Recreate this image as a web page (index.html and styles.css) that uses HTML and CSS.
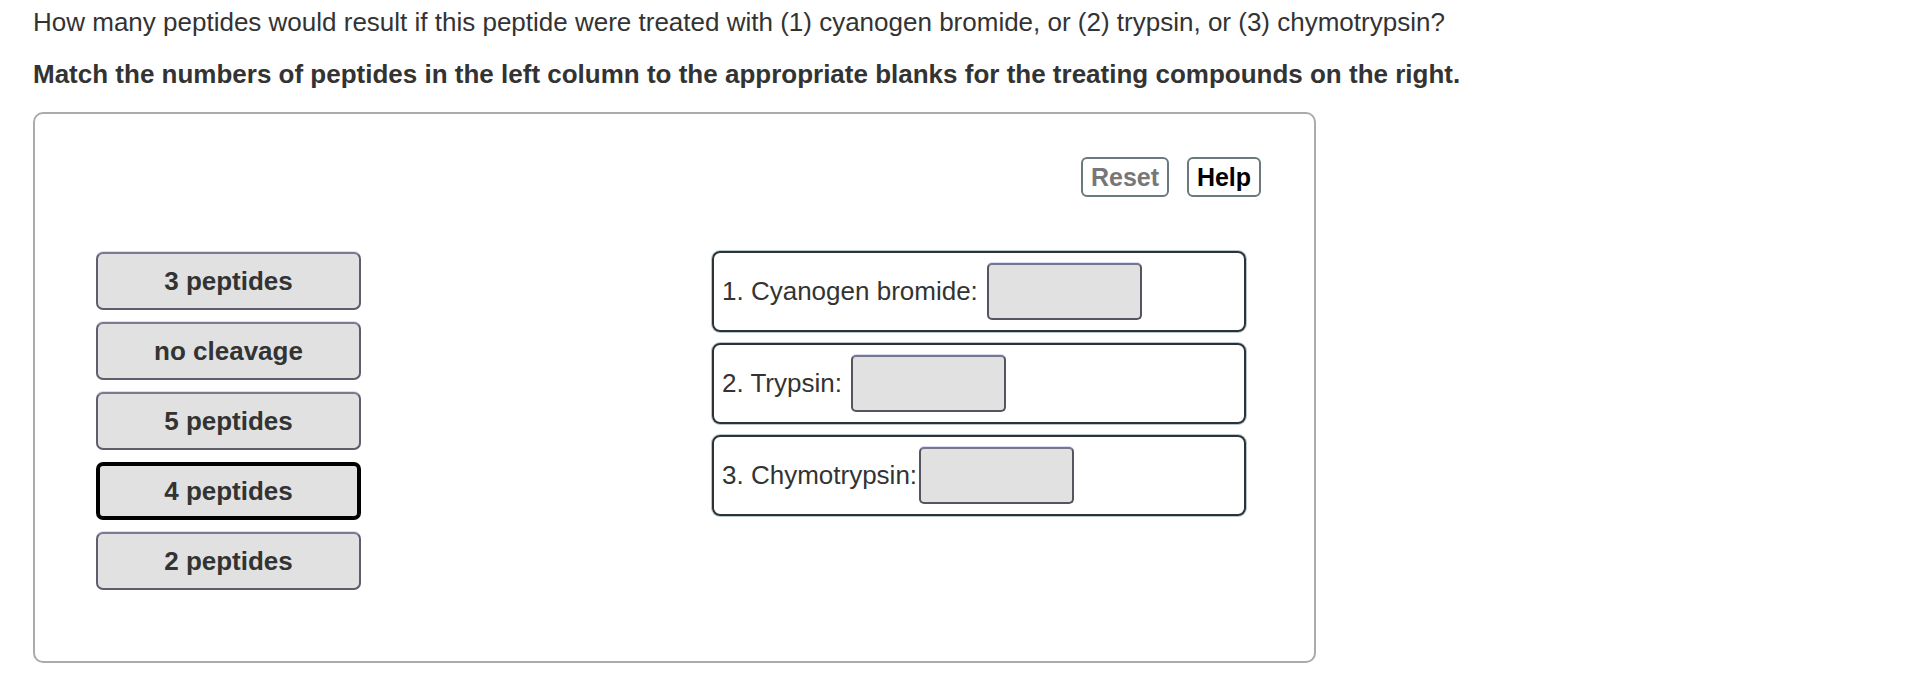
FILE: index.html
```html
<!DOCTYPE html>
<html lang="en">
<head>
<meta charset="utf-8">
<title>Peptide matching</title>
<link rel="stylesheet" href="styles.css">
</head>
<body>
<p class="question">How many peptides would result if this peptide were treated with (1) cyanogen bromide, or (2) trypsin, or (3) chymotrypsin?</p>
<p class="instruction">Match the numbers of peptides in the left column to the appropriate blanks for the treating compounds on the right.</p>
<div class="panel">
  <div class="toolbar">
    <button class="tool-btn reset">Reset</button>
    <button class="tool-btn help">Help</button>
  </div>
  <div class="workspace">
    <div class="choices">
      <div class="chip">3 peptides</div>
      <div class="chip">no cleavage</div>
      <div class="chip">5 peptides</div>
      <div class="chip chip-selected">4 peptides</div>
      <div class="chip">2 peptides</div>
    </div>
    <div class="targets">
      <div class="target"><span class="label">1. Cyanogen bromide:&nbsp;</span><span class="blank"></span></div>
      <div class="target"><span class="label">2. Trypsin:&nbsp;</span><span class="blank"></span></div>
      <div class="target"><span class="label">3. Chymotrypsin:</span><span class="blank"></span></div>
    </div>
  </div>
</div>
</body>
</html>
```
FILE: styles.css
```css
* { box-sizing: border-box; }
html, body { margin: 0; padding: 0; background: #fff; }
body {
  font-family: "Liberation Sans", Arial, Helvetica, sans-serif;
  color: #333;
  padding: 7px 0 0 33px;
}
.question {
  margin: 0;
  font-size: 26px;
  line-height: 30px;
}
.instruction {
  margin: 22px 0 0 0;
  font-size: 26px;
  line-height: 30px;
  font-weight: bold;
}
.panel {
  margin-top: 23px;
  width: 1283px;
  height: 551px;
  border: 2px solid #ababab;
  border-radius: 10px;
  padding: 43px 53px 0 61px;
}
.toolbar {
  display: flex;
  justify-content: flex-end;
  gap: 18px;
  height: 40px;
}
.tool-btn {
  height: 40px;
  background: #fff;
  border: 2px solid #6b797c;
  border-radius: 6px;
  font-family: "Liberation Sans", Arial, Helvetica, sans-serif;
  font-weight: bold;
  font-size: 25px;
  padding: 0;
}
.reset { width: 88px; color: #777; }
.help { width: 74px; color: #000; }
.workspace {
  display: flex;
  margin-top: 54px;
}
.choices {
  width: 265px;
  display: flex;
  flex-direction: column;
  gap: 12px;
  padding-top: 1px;
}
.chip {
  height: 58px;
  background: #e1e1e1;
  border: 2px solid #5d5d6b;
  border-top-color: #7a7a90;
  box-shadow: 0 -1px 0 #dcdcf4;
  border-radius: 7px;
  display: flex;
  align-items: center;
  justify-content: center;
  font-weight: bold;
  font-size: 26px;
  color: #333;
}
.chip-selected {
  border: 4px solid #000;
  box-shadow: none;
}
.targets {
  margin-left: 351px;
  width: 534px;
  display: flex;
  flex-direction: column;
  gap: 11px;
}
.target {
  height: 81px;
  border: 2px solid #2c3235;
  box-shadow: 0 0 0 1px #b6c6cc;
  border-radius: 8px;
  display: flex;
  align-items: center;
  padding: 0 8px;
  font-size: 26px;
  color: #333;
}
.label { white-space: pre; }
.blank {
  width: 155px;
  height: 57px;
  margin-left: 2px;
  background: #e1e1e1;
  border: 2px solid #55555f;
  border-top-color: #77778a;
  box-shadow: 0 -1px 0 #dcdcf4;
  border-radius: 5px;
}
```
